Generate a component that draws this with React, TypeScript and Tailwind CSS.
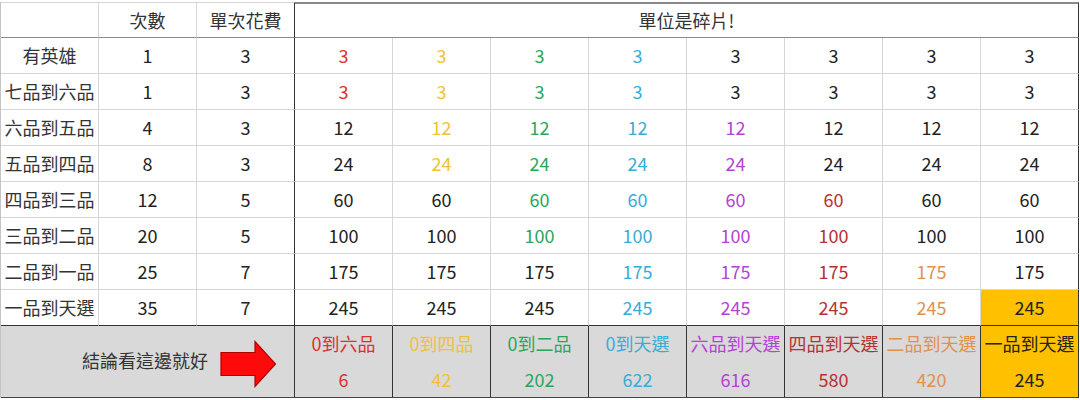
const tone: Record<string, string> = {
  r: "text-[#dc3030]",
  y: "text-[#f0c234]",
  g: "text-[#2aa65a]",
  c: "text-[#38acd8]",
  p: "text-[#b442d4]",
  d: "text-[#b53232]",
  o: "text-[#e3904c]",
  k: "text-[#222]",
};

const rows = [
  { label: "有英雄", times: "1", cost: "3", value: "3", colors: "rygckkkk" },
  { label: "七品到六品", times: "1", cost: "3", value: "3", colors: "rygckkkk" },
  { label: "六品到五品", times: "4", cost: "3", value: "12", colors: "kygcpkkk" },
  { label: "五品到四品", times: "8", cost: "3", value: "24", colors: "kygcpkkk" },
  { label: "四品到三品", times: "12", cost: "5", value: "60", colors: "kkgcpdkk" },
  { label: "三品到二品", times: "20", cost: "5", value: "100", colors: "kkgcpdkk" },
  { label: "二品到一品", times: "25", cost: "7", value: "175", colors: "kkkcpdok" },
  { label: "一品到天選", times: "35", cost: "7", value: "245", colors: "kkkcpdok" },
];

const totals = [
  { name: "0到六品", sum: "6", color: "r" },
  { name: "0到四品", sum: "42", color: "y" },
  { name: "0到二品", sum: "202", color: "g" },
  { name: "0到天選", sum: "622", color: "c" },
  { name: "六品到天選", sum: "616", color: "p" },
  { name: "四品到天選", sum: "580", color: "d" },
  { name: "二品到天選", sum: "420", color: "o" },
  { name: "一品到天選", sum: "245", color: "k" },
];

function Arrow() {
  return (
    <svg width="57" height="48" viewBox="0 0 57 48" className="shrink-0">
      <path
        d="M1 12.5 H35 V1.5 L55.5 24 L35 46.5 V35.5 H1 Z"
        fill="#ff0a0a"
        stroke="#b30000"
        strokeWidth="1.2"
        strokeLinejoin="miter"
      />
    </svg>
  );
}

export default function App() {
  const light = "border-[#d6d6d6]";
  return (
    <div className="w-[1080px] h-[400px] bg-white pt-[2px] font-['Noto_Sans_CJK_TC','Noto_Sans',sans-serif] text-[18px] text-[#222] overflow-hidden">
      <div className="grid grid-cols-[repeat(11,98px)] grid-rows-[36px_repeat(8,36px)_72px] border-l border-l-[#c4c4c4] w-[1078px]">
        {/* header */}
        <div className={`border-r border-b border-t ${light} border-b-[#8a8a8a]`} />
        <div className={`flex items-center justify-center border-r border-b border-t ${light} border-b-[#8a8a8a] text-[#333]`}>
          次數
        </div>
        <div className={`flex items-center justify-center border-r border-b border-t ${light} border-b-[#8a8a8a] border-r-[#333] text-[#333]`}>
          單次花費
        </div>
        <div className="col-span-8 flex items-center justify-center border-t-2 border-t-[#8a8a8a] border-b border-b-[#8a8a8a] border-r border-r-[#333] text-[#333]">
          單位是碎片!
        </div>

        {rows.map((row, ri) => {
          const last = ri === rows.length - 1;
          const bottom = last ? "border-b-[#333]" : "";
          return [
            <div
              key={`l${ri}`}
              className={`flex items-center justify-center border-r border-b ${light} ${bottom} text-[#333]`}
            >
              {row.label}
            </div>,
            <div
              key={`t${ri}`}
              className={`flex items-center justify-center border-r border-b ${light} ${bottom}`}
            >
              {row.times}
            </div>,
            <div
              key={`c${ri}`}
              className={`flex items-center justify-center border-r border-b ${light} border-r-[#333] ${bottom}`}
            >
              {row.cost}
            </div>,
            ...row.colors.split("").map((c, ci) => (
              <div
                key={`v${ri}-${ci}`}
                className={`flex items-center justify-center border-r border-b ${light} ${bottom} ${
                  ci === 7 ? "border-r-[#333]" : ""
                } ${last && ci === 7 ? "bg-[#ffc000]" : ""} ${tone[c]}`}
              >
                {row.value}
              </div>
            )),
          ];
        })}

        {/* summary row */}
        <div className="col-span-3 flex items-center justify-end gap-[12px] pr-[17px] pt-[4px] bg-[#d9d9d9] border-r border-b border-r-[#333] border-b-[#444] text-[#333]">
          <span className="-mt-[6px]">結論看這邊就好</span>
          <Arrow />
        </div>
        {totals.map((t, i) => (
          <div
            key={t.name}
            className={`flex flex-col items-center border-r border-b border-r-[#333] border-b-[#444] ${
              i === 7 ? "bg-[#ffc000]" : "bg-[#d9d9d9]"
            } ${tone[t.color]}`}
          >
            <div className="h-[36px] flex items-center whitespace-nowrap">{t.name}</div>
            <div className="h-[36px] flex items-center">{t.sum}</div>
          </div>
        ))}
      </div>
    </div>
  );
}
